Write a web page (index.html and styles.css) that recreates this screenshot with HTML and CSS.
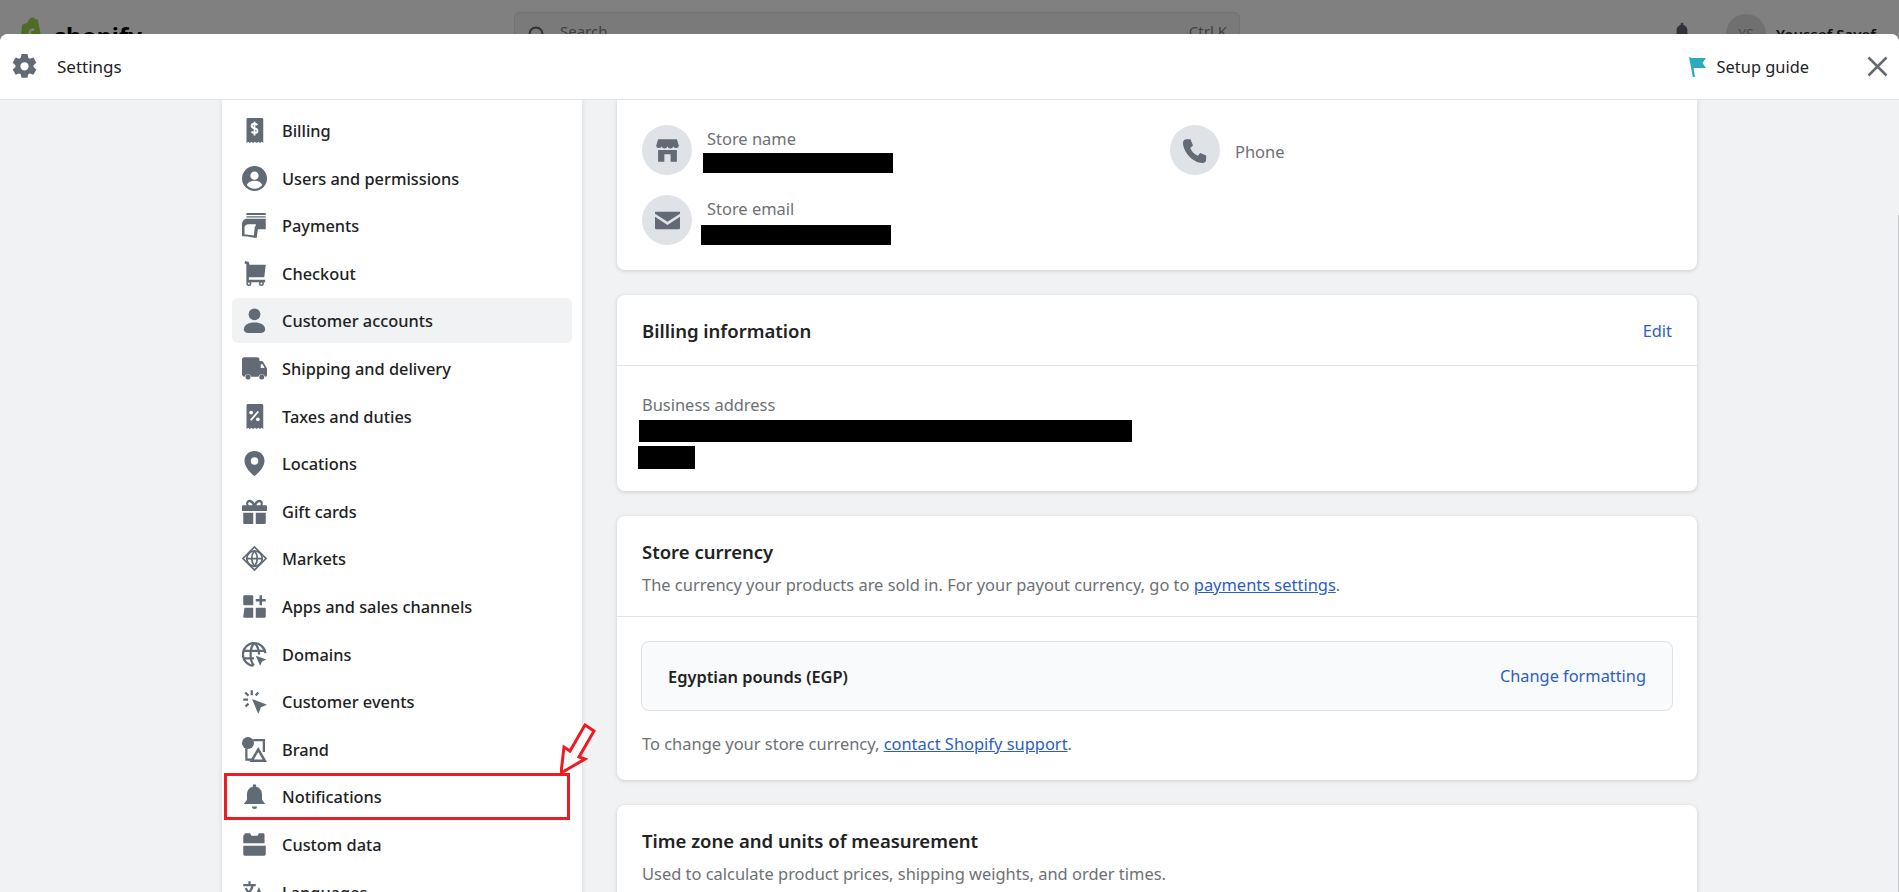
FILE: index.html
```html
<!DOCTYPE html>
<html lang="en">

<head>
  <meta charset="UTF-8">
  <meta name="viewport" content="width=device-width, initial-scale=1.0">
  <title>Settings</title>
  <link rel="stylesheet" href="styles.css">
</head>

<body>
  <!-- dimmed admin bar behind the modal -->
  <div class="topbar">
    <svg class="shop-bag" viewBox="0 0 24 28"><path d="M3 7l5-2c1-3 3-5 5-5s2 1 3 2l2 0 5 25-18 1-4-3z"/><path class="shop-s" d="M15 11c-3-1-6 1-6 4 0 3 4 3 3 5-1 1-3 0-4 0l-1 3c3 1 7 0 7-4 0-3-3-3-3-5 0-1 2-1 3-1z"/></svg>
    <span class="shop-name">shopify</span>
    <div class="search">
      <svg class="search-icon" viewBox="0 0 20 20"><circle cx="9" cy="9" r="6.5"/><path d="M14 14l5 5"/></svg>
      <span>Search</span>
      <span class="search-key">Ctrl K</span>
    </div>
    <svg class="top-bell" viewBox="0 0 20 20"><path d="M10 0a1 1 0 0 1 1 2c3 .6 5 3 5 6v5l2 3H2l2-3V8c0-3 2-5.400 5-6a1 1 0 0 1 1-2z"/></svg>
    <div class="avatar">YS</div>
    <span class="user-name">Youssef Sayef</span>
  </div>

  <div class="modal">
    <header class="modal-head">
      <svg class="gear" viewBox="0 0 20 20"><path fill-rule="evenodd" d="M7.600 0h4.800l.6 3 1.200.7 2.900-1 2.400 4.200-2.300 2 0 1.400 2.300 2-2.400 4.200-2.900-1-1.200.7-.6 2.800H7.600l-.6-2.800-1.200-.7-2.900 1L.5 12.300l2.300-2 0-1.400-2.300-2 2.400-4.200 2.900 1L7 3zM10 6.500a3.300 3.300 0 1 0 0 6.600 3.300 3.300 0 0 0 0-6.600z"/></svg>
      <span class="modal-title">Settings</span>
      <svg class="flag" viewBox="0 0 17 20"><path d="M0 0l3 1h14l-3.500 5 3.500 5H4.600l1.400 9H3.800z"/></svg>
      <span class="setup">Setup guide</span>
      <svg class="close" viewBox="0 0 21 21"><path d="M1.500 1.500l18 18M19.500 1.500l-18 18"/></svg>
    </header>

    <div class="main">
      <nav class="sidebar">
        <a class="nav-item">
          <svg viewBox="0 0 20 20"><path d="M4 0h12a1 1 0 0 1 1 1v19l-1.300-1-1.300 1-1.400-1-1.300 1-1.400-1-1.300 1-1.400-1-1.300 1-1.400-1-1.300 1V1a1 1 0 0 1 1-1z"/><path class="cut-line" d="M12.300 5.700c-.5-.8-1.300-1.100-2.300-1.100-1.300 0-2.300.7-2.300 1.800 0 2.500 4.700 1.300 4.700 3.700 0 1.100-1 1.900-2.400 1.900-1.100 0-2-.4-2.500-1.200M10 3v11"/></svg>
          <span>Billing</span>
        </a>
        <a class="nav-item">
          <svg viewBox="0 0 20 20"><circle cx="10" cy="10" r="10"/><circle class="cut" cx="10" cy="7.700" r="3.300"/><path class="cut" d="M3.800 15.200c1-2.300 3.400-3.400 6.200-3.400s5.200 1.100 6.200 3.400c-1.500 1.800-3.700 2.900-6.200 2.900s-4.700-1.100-6.200-2.900z"/></svg>
          <span>Users and permissions</span>
        </a>
        <a class="nav-item">
          <svg viewBox="0 0 20 20"><path d="M3.500 0h15.500v1.500H3.500zM3.500 2.500h15.500v1H3.500zM3 4.500h16V13h-6.300l-.9 6.500-.4.500-8.600-1.500H0V9a5 5 0 0 1 3-4.500z"/><path class="cut" d="M2 11a3 3 0 0 1 3-2h6v1.500h-.7l-.8 7.400L2 17z"/></svg>
          <span>Payments</span>
        </a>
        <a class="nav-item">
          <svg viewBox="0 0 20 20"><path d="M2.500 0l3 .7.500 2.300h13l-1.200 10H5.500v2h13V17H3.500V2.300L2 2z"/><circle cx="5.500" cy="18" r="2"/><circle cx="15.500" cy="18" r="2"/><circle class="cut" cx="5.500" cy="18" r=".8"/><circle class="cut" cx="15.500" cy="18" r=".8"/></svg>
          <span>Checkout</span>
        </a>
        <a class="nav-item is-active">
          <svg viewBox="0 0 20 20"><circle cx="10" cy="5" r="4.700"/><path d="M10 11.500c5 0 8.500 2 8.500 5.500 0 2-1.500 3-3.500 3H5c-2 0-3.500-1-3.500-3 0-3.500 3.500-5.500 8.500-5.500z"/></svg>
          <span>Customer accounts</span>
        </a>
        <a class="nav-item">
          <svg viewBox="0 0 20 20"><path d="M2 1h10a2 2 0 0 1 2 2v1h1.500c.7 0 1.300.3 1.600.9L20 10v5a1.500 1.500 0 0 1-1 1.500h-.5a3 3 0 0 0-5.500 0H7.500a3 3 0 0 0-5.500 0A2 2 0 0 1 0 15V3a2 2 0 0 1 2-2z"/><circle cx="4.800" cy="16.800" r="2"/><circle cx="15.800" cy="16.800" r="2"/><path class="cut" d="M15 6.500h1.500l1.500 3h-3z"/></svg>
          <span>Shipping and delivery</span>
        </a>
        <a class="nav-item">
          <svg viewBox="0 0 20 20"><path d="M4 0h12a1 1 0 0 1 1 1v19l-1.300-1-1.300 1-1.400-1-1.300 1-1.400-1-1.300 1-1.400-1-1.300 1-1.400-1-1.300 1V1a1 1 0 0 1 1-1z"/><path class="cut-line" d="M13 6l-6 7"/><circle class="cut" cx="7.300" cy="6.800" r="1.500"/><circle class="cut" cx="12.700" cy="12.200" r="1.500"/></svg>
          <span>Taxes and duties</span>
        </a>
        <a class="nav-item">
          <svg viewBox="0 0 20 20"><path fill-rule="evenodd" d="M10 0c4.500 0 8 3.300 8 7.700 0 4.800-4.300 9.500-8 12.300-3.700-2.800-8-7.500-8-12.300C2 3.300 5.500 0 10 0zm0 5a3 3 0 1 0 0 6 3 3 0 0 0 0-6z"/></svg>
          <span>Locations</span>
        </a>
        <a class="nav-item">
          <svg viewBox="0 0 20 20"><path fill-rule="evenodd" d="M0 6a1 1 0 0 1 1-1h2.700C2.500 3 4 .5 6 .5c1.800 0 3.200 1.200 4 2.800C10.800 1.700 12.200.5 14 .5c2 0 3.500 2.500 2.300 4.500H19a1 1 0 0 1 1 1v3.500H0zM6 2.500c-1 0-1.500 1.500-.5 2.500h3C8 3.500 7 2.500 6 2.500zm8 0c-1 0-2 1-2.500 2.500h3c1-1 .5-2.500-.5-2.500z"/><path d="M1 11h8v9H2a1 1 0 0 1-1-1zM11 11h8v8a1 1 0 0 1-1 1h-7z"/></svg>
          <span>Gift cards</span>
        </a>
        <a class="nav-item">
          <svg viewBox="0 0 20 20"><g class="line-icon line-thin"><path d="M10 .8L19.200 10 10 19.200 .8 10z"/><circle cx="10" cy="10" r="6.200"/><path d="M3.800 10h12.400M10 3.800c-3 3.500-3 9 0 12.400M10 3.800c3 3.500 3 9 0 12.400"/></g></svg>
          <span>Markets</span>
        </a>
        <a class="nav-item">
          <svg viewBox="0 0 20 20"><path d="M2 1h6a1 1 0 0 1 1 1v7H2a1 1 0 0 1-1-1V2a1 1 0 0 1 1-1zM2 11h7v8H2a1 1 0 0 1-1-1zM11 11h7a1 1 0 0 1 1 1v6a1 1 0 0 1-1 1h-7zM14 1h2v3h3v2h-3v3h-2V6h-3V4h3z"/></svg>
          <span>Apps and sales channels</span>
        </a>
        <a class="nav-item">
          <svg viewBox="0 0 20 20"><g class="line-icon"><path d="M18.700 9A9 9 0 1 0 9 18.900"/><path d="M1.500 7h17M1.500 13h8M9.500 1.200C6 5 6 15 9.500 18.800M10.500 1.200C13 4 13.600 7 13.600 10"/></g><path d="M11 11l8.500 3-3.500 1.500-1.500 3.500z"/></svg>
          <span>Domains</span>
        </a>
        <a class="nav-item">
          <svg viewBox="0 0 20 20"><g class="line-icon"><path d="M7.800 1v4M2.600 2.800l2.600 2.600M13 2.800l-2 2.400M1 8.500h3.800M2.800 14l2.400-2.300"/></g><path d="M8 8l12 4.500-4.900 2L13 20z"/></svg>
          <span>Customer events</span>
        </a>
        <a class="nav-item">
          <svg viewBox="0 0 20 20"><circle cx="4.800" cy="4.800" r="4.800"/><g class="line-icon"><path d="M9 2.500h8.500V12M3.500 9v9h5"/></g><path fill-rule="evenodd" d="M13 8l7 12H6zm0 4l-3.500 6h7z"/></svg>
          <span>Brand</span>
        </a>
        <a class="nav-item">
          <svg viewBox="0 0 20 20"><path d="M10 .3a1 1 0 0 1 1 1.700c3.300.7 5 3.400 5 6.500v4l2.500 3.500h-17L4 12.500v-4c0-3.100 1.700-5.800 5-6.500A1 1 0 0 1 10 .3zM8 18h4a2 2 0 0 1-4 0z"/></svg>
          <span>Notifications</span>
        </a>
        <a class="nav-item">
          <svg viewBox="0 0 20 20"><path d="M2 2c0-.6.4-1 1-1h3.500l1 2h5l1-2H17c.6 0 1 .4 1 1v7H1V3zM1 11h18v6.500a1.500 1.500 0 0 1-1.500 1.500h-15A1.500 1.500 0 0 1 1 17.500z"/></svg>
          <span>Custom data</span>
        </a>
        <a class="nav-item">
          <svg viewBox="0 0 20 20"><g class="line-icon"><path d="M1 4h10M6 1v3M8.500 4C8 8 5.500 11 1.500 12.500M3 6.500C4 9 6 11 9 12"/><path d="M9 19l4.500-11 4.500 11M10.500 16h6"/></g></svg>
          <span>Languages</span>
        </a>
      </nav>

      <div class="content">
        <section class="card card-first">
          <div class="contact-grid">
            <div class="contact">
              <div class="round">
                <svg viewBox="0 0 20 20"><path d="M2.500 1h15l1.500 5a2 2 0 0 1-2 2 2.500 2.500 0 0 1-2.300-1.200A2.500 2.500 0 0 1 10 6.800a2.500 2.500 0 0 1-4.700 0A2.500 2.500 0 0 1 3 8a2 2 0 0 1-2-2zM2.500 9.500h15V19H12.500v-6h-5v6H2.500z"/></svg>
              </div>
              <div class="contact-text">
                <span class="muted">Store name</span>
                <span class="redact redact-name"></span>
              </div>
            </div>
            <div class="contact contact-phone">
              <div class="round">
                <svg viewBox="0 0 20 20"><path d="M3 1h3l2 5-2.200 2c.8 2.500 3.200 5 6 6.200l2-2.200 4.700 2v3a3 3 0 0 1-3 3C8 20 0 11 0 4a3 3 0 0 1 3-3z"/></svg>
              </div>
              <span class="muted phone-label">Phone</span>
            </div>
            <div class="contact">
              <div class="round">
                <svg viewBox="0 0 20 20"><path d="M0 3h20v1.500l-10 6.500L0 4.500zM0 7l10 6.500L20 7v9a1 1 0 0 1-1 1H1a1 1 0 0 1-1-1z"/></svg>
              </div>
              <div class="contact-text">
                <span class="muted">Store email</span>
                <span class="redact redact-email"></span>
              </div>
            </div>
          </div>
        </section>

        <section class="card">
          <div class="card-head">
            <h2>Billing information</h2>
            <a class="link">Edit</a>
          </div>
          <div class="address">
            <span class="muted">Business address</span>
            <span class="redact redact-line1"></span>
            <span class="redact redact-line2"></span>
          </div>
        </section>

        <section class="card">
          <div class="card-intro">
            <h2>Store currency</h2>
            <p class="muted">The currency your products are sold in. For your payout currency, go to <a class="link-under">payments settings</a>.</p>
          </div>
          <div class="currency">
            <div class="currency-box">
              <strong>Egyptian pounds (EGP)</strong>
              <a class="link">Change formatting</a>
            </div>
            <p class="muted">To change your store currency, <a class="link-under">contact Shopify support</a>.</p>
          </div>
        </section>

        <section class="card">
          <div class="card-intro">
            <h2>Time zone and units of measurement</h2>
            <p class="muted">Used to calculate product prices, shipping weights, and order times.</p>
          </div>
        </section>
      </div>
    </div>

    <!-- annotation drawn over the screenshot -->
    <div class="mark-box"></div>
    <svg class="mark-arrow" viewBox="0 0 40 52"><path d="M25 2l9 6-15 26 6 2-24 14 3-26 6 4z"/></svg>
  </div>
  <div class="scroll-sliver"></div>
</body>

</html>
```

FILE: styles.css
```css
* {
  margin: 0;
  padding: 0;
  box-sizing: border-box;
}

body {
  width: 1899px;
  height: 892px;
  overflow: hidden;
  position: relative;
  background-color: #808080;
  font-family: "Noto Sans", "Open Sans", sans-serif;
  font-size: 16.35px;
  color: #202223;
  display: flex;
  flex-direction: column;
}

/* dimmed bar */
.topbar {
  height: 34px;
  flex: none;
  overflow: hidden;
  display: flex;
  align-items: flex-start;
  padding-left: 19px;
}

.shop-bag {
  width: 25px;
  height: 30px;
  margin-top: 17px;
  fill: #4f6b25;
  flex: none;
}

.shop-s {
  fill: #808080;
}

.shop-name {
  width: 100px;
  margin: 18px 0 0 10px;
  font-size: 24px;
  font-weight: 700;
  line-height: 36px;
  color: #000;
}

.search {
  width: 726px;
  height: 44px;
  margin: 12px 0 0 360px;
  padding: 8px 12px;
  border: 1px solid #727272;
  border-radius: 6px;
  background-color: #7a7a7a;
  display: flex;
  align-items: flex-start;
  font-size: 15px;
  color: #3f3f3f;
  flex: none;
}

.search-icon {
  width: 20px;
  height: 20px;
  margin: 4px 13px 0 0;
  fill: none;
  stroke: #303030;
  stroke-width: 2;
}

.search-key {
  margin-left: auto;
}

.top-bell {
  width: 18px;
  height: 20px;
  margin: 22px 0 0 433px;
  fill: #30343a;
  flex: none;
}

.avatar {
  width: 40px;
  height: 40px;
  margin: 14px 0 0 35px;
  border-radius: 50%;
  background-color: #707070;
  color: #4a4a4a;
  font-size: 14px;
  line-height: 40px;
  text-align: center;
  flex: none;
}

.user-name {
  margin: 24px 0 0 10px;
  font-weight: 600;
  font-size: 15px;
  color: #111;
  white-space: nowrap;
}

/* modal */
.modal {
  flex: 1;
  min-height: 0;
  position: relative;
  display: flex;
  flex-direction: column;
  border-radius: 8px 8px 0 0;
  overflow: hidden;
  background-color: #f1f2f4;
}

.modal-head {
  height: 66px;
  flex: none;
  display: flex;
  align-items: center;
  padding: 0 11px 0 12px;
  background-color: #fff;
  border-bottom: 1px solid #e1e3e5;
}

.gear {
  width: 25px;
  height: 25px;
  fill: #616a75;
}

.modal-title {
  margin-left: 20px;
  font-size: 17px;
}

.flag {
  width: 17px;
  height: 20px;
  margin-left: auto;
  fill: #2bacbb;
}

.setup {
  margin: 0 58px 0 11px;
  font-size: 16.4px;
}

.close {
  width: 21px;
  height: 21px;
  fill: none;
  stroke: #616a75;
  stroke-width: 2.5;
}

.main {
  flex: 1;
  min-height: 0;
  display: flex;
  align-items: flex-start;
  padding-left: 222px;
  gap: 35px;
  overflow: hidden;
}

/* left nav */
.sidebar {
  width: 360px;
  flex: none;
  padding: 8px 10px;
  display: flex;
  flex-direction: column;
  gap: 2.6px;
  background-color: #fff;
  box-shadow: 0 0 5px rgba(23, 24, 24, 0.12);
}

.nav-item {
  height: 45px;
  flex: none;
  display: flex;
  align-items: center;
  gap: 15px;
  padding-left: 10px;
  border-radius: 6px;
  font-weight: 500;
}

.nav-item span {
  padding-top: 1px;
}

.nav-item svg {
  width: 25px;
  height: 25px;
  flex: none;
  fill: #616a75;
}

.nav-item.is-active {
  background-color: #f1f2f4;
}

.cut {
  fill: #fff;
}

.cut-line {
  fill: none;
  stroke: #fff;
  stroke-width: 1.5;
}

.line-icon {
  fill: none;
  stroke: #616a75;
  stroke-width: 1.8;
}

.line-thin {
  stroke-width: 1.4;
}

/* right column */
.content {
  width: 1080px;
  flex: none;
  display: flex;
  flex-direction: column;
  gap: 25px;
}

.card {
  background-color: #fff;
  border-radius: 8px;
  box-shadow: 0 1px 4px rgba(23, 24, 24, 0.16);
}

.card-first {
  border-radius: 0 0 8px 8px;
  padding: 25px;
}

.contact-grid {
  display: grid;
  grid-template-columns: 528px 1fr;
  row-gap: 20px;
}

.contact {
  height: 50px;
  display: flex;
  gap: 15px;
}

.contact-phone {
  align-items: center;
}

.phone-label {
  padding-top: 3px;
}

.round {
  width: 50px;
  height: 50px;
  flex: none;
  border-radius: 50%;
  background-color: #dfe2e6;
  display: flex;
  align-items: center;
  justify-content: center;
}

.round svg {
  width: 25px;
  height: 25px;
  fill: #616a75;
}

.contact-text {
  display: flex;
  flex-direction: column;
  padding-top: 2px;
}

.muted {
  color: #6d7175;
  font-size: 16.45px;
  line-height: 24px;
}

.redact {
  display: block;
  background-color: #000;
}

.redact-name {
  width: 190px;
  height: 20px;
  margin: 2px 0 0 -4px;
}

.redact-email {
  width: 190px;
  height: 20px;
  margin: 4px 0 0 -6px;
}

.redact-line1 {
  width: 493px;
  height: 22px;
  margin: 3px 0 0 -3px;
}

.redact-line2 {
  width: 57px;
  height: 23px;
  margin: 4px 0 0 -4px;
}

h2 {
  font-size: 18.5px;
  font-weight: 600;
  line-height: 24px;
}

.card-head {
  height: 71px;
  padding: 2px 25px 0;
  display: flex;
  align-items: center;
  justify-content: space-between;
  border-bottom: 1px solid #e1e3e5;
}

.link {
  color: #2c5ec4;
}

.link-under {
  color: #2c5ec4;
  text-decoration: underline;
}

.address {
  height: 125px;
  padding: 27px 25px 0;
  display: flex;
  flex-direction: column;
}

.card-intro {
  padding: 24px 25px 19px;
  border-bottom: 1px solid #e1e3e5;
  display: flex;
  flex-direction: column;
  gap: 9px;
}

.currency {
  padding: 24px;
}

.currency p {
  margin-top: 21px;
  padding-left: 1px;
}

.currency-box {
  height: 70px;
  padding: 0 26px;
  display: flex;
  align-items: center;
  justify-content: space-between;
  background-color: #f9fafb;
  border: 1px solid #dfe3e8;
  border-radius: 8px;
}

.currency-box strong {
  font-weight: 600;
  font-size: 16.4px;
}

/* annotation */
.mark-box {
  position: absolute;
  left: 224px;
  top: 739px;
  width: 346px;
  height: 47px;
  border: 3px solid #ed1c24;
}

.mark-arrow {
  position: absolute;
  left: 560px;
  top: 689px;
  width: 40px;
  height: 52px;
  fill: #fff;
  stroke: #ed1c24;
  stroke-width: 3;
}

.scroll-sliver {
  position: absolute;
  right: 0;
  top: 215px;
  width: 1px;
  height: 677px;
  background-color: #c8c9cc;
}
```
